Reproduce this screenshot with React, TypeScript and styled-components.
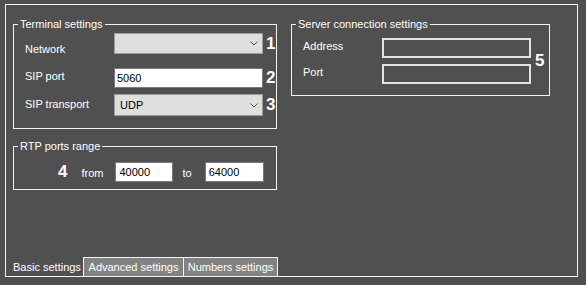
import React from 'react';
import styled, { createGlobalStyle } from 'styled-components';

const GlobalStyle = createGlobalStyle`
    body {
        margin:0;
        background:#505050;
        font-family:"Liberation Sans", Arial, sans-serif;
        font-size:11px;
        color:#ffffff;
    }
`;

const Window = styled.div`
    width:586px;
    height:285px;
    box-sizing:border-box;
    padding:4px 0 0 5px;
    background:#505050;
`;

const Frame = styled.div`
    width:573px;
    height:273px;
    box-sizing:border-box;
    border:1px solid #f2f2f2;
    display:flex;
    flex-direction:column;
`;

const Body = styled.div`
    flex:1;
    display:flex;
    flex-direction:row;
    align-items:flex-start;
    gap:14px;
    padding:13px 0 0 7px;
`;

const Column = styled.div`
    display:flex;
    flex-direction:column;
    gap:11px;
`;

const Group = styled.fieldset<{ $width: number }>`
    margin:0;
    padding:0;
    min-width:0;
    width:${p => p.$width}px;
    box-sizing:border-box;
    border:1px solid #f2f2f2;
`;

const Legend = styled.legend`
    margin-left:4px;
    padding:0 2px;
    line-height:12px;
    font-size:11px;
    color:#ffffff;
`;

const Content = styled.div<{ $pad: string }>`
    padding:${p => p.$pad};
`;

const Row = styled.div<{ $top: number; $height: number }>`
    display:flex;
    flex-direction:row;
    align-items:flex-start;
    margin-top:${p => p.$top}px;
    height:${p => p.$height}px;
`;

const Label = styled.div<{ $width: number; $dy: number }>`
    width:${p => p.$width}px;
    padding-top:${p => p.$dy}px;
    line-height:13px;
    color:#ffffff;
`;

const Combo = styled.div<{ $width: number }>`
    width:${p => p.$width}px;
    height:100%;
    box-sizing:border-box;
    background:#dfdfdf;
    border:1px solid #9c9c9c;
    color:#000000;
    display:flex;
    align-items:center;
    justify-content:space-between;
    padding:0 4px 0 5px;
`;

const TextBox = styled.div<{ $width: number }>`
    width:${p => p.$width}px;
    height:100%;
    box-sizing:border-box;
    background:#ffffff;
    border:1px solid #7a7a7a;
    color:#000000;
    display:flex;
    align-items:center;
    padding-left:2px;
`;

const EmptyBox = styled.div<{ $width: number }>`
    width:${p => p.$width}px;
    height:100%;
    box-sizing:border-box;
    border:2px solid #e4e4e4;
`;

const Marker = styled.div<{ $ml: number }>`
    margin-left:${p => p.$ml}px;
    font-size:17px;
    font-weight:bold;
    line-height:20px;
    color:#ffffff;
    align-self:center;
`;

const ServerGrid = styled.div`
    display:grid;
    grid-template-columns:79px 149px auto;
    grid-template-rows:20px 20px;
    row-gap:6px;
    align-items:center;
`;

const ServerLabel = styled.div<{ $dy: number }>`
    line-height:13px;
    margin-top:${p => p.$dy}px;
`;

const ServerMarker = styled(Marker)`
    grid-row:1 / span 2;
    grid-column:3;
`;

const RangeRow = styled.div`
    display:flex;
    flex-direction:row;
    align-items:center;
    height:20px;
`;

const RangeText = styled.div<{ $ml: number }>`
    margin-left:${p => p.$ml}px;
    line-height:13px;
    padding-top:3px;
`;

const Field = styled(TextBox)<{ $ml: number }>`
    margin-left:${p => p.$ml}px;
    padding-left:3px;
`;

const TabStrip = styled.div`
    height:19px;
    display:flex;
    flex-direction:row;
    align-items:stretch;
`;

const Tab = styled.div<{ $width: number; $active?: boolean; $last?: boolean }>`
    width:${p => p.$width}px;
    box-sizing:border-box;
    display:flex;
    align-items:center;
    justify-content:${p => (p.$active ? 'flex-start' : 'center')};
    padding-left:${p => (p.$active ? '7px' : '0')};
    background:${p => (p.$active ? 'transparent' : '#828282')};
    border-top:${p => (p.$active ? 'none' : '1px solid #f2f2f2')};
    border-left:${p => (p.$active ? 'none' : '1px solid #f2f2f2')};
    border-right:${p => (p.$last ? '1px solid #f2f2f2' : 'none')};
    color:#ffffff;
    font-size:11px;
`;

const Chevron: React.FC = () => (
    <svg width="8" height="5" viewBox="0 0 8 5">
        <path d="M0.5 0.5 L4 4 L7.5 0.5" fill="none" stroke="#555555" strokeWidth="1" />
    </svg>
);

const App: React.FC = () => {
    return (
        <Window>
            <GlobalStyle />
            <Frame>
                <Body>
                    <Column>
                        <Group $width={264}>
                            <Legend>Terminal settings</Legend>
                            <Content $pad="0 0 12px 11px">
                                <Row $top={3} $height={21}>
                                    <Label $width={89} $dy={10}>Network</Label>
                                    <Combo $width={149}><span /><Chevron /></Combo>
                                    <Marker $ml={3}>1</Marker>
                                </Row>
                                <Row $top={14} $height={20}>
                                    <Label $width={89} $dy={2}>SIP port</Label>
                                    <TextBox $width={149}>5060</TextBox>
                                    <Marker $ml={3}>2</Marker>
                                </Row>
                                <Row $top={6} $height={22}>
                                    <Label $width={89} $dy={4}>SIP transport</Label>
                                    <Combo $width={149}><span>UDP</span><Chevron /></Combo>
                                    <Marker $ml={3}>3</Marker>
                                </Row>
                            </Content>
                        </Group>

                        <Group $width={264}>
                            <Legend>RTP ports range</Legend>
                            <Content $pad="10px 0 7px 44px">
                                <RangeRow>
                                    <Marker $ml={0}>4</Marker>
                                    <RangeText $ml={14}>from</RangeText>
                                    <Field $width={58} $ml={12}>40000</Field>
                                    <RangeText $ml={9}>to</RangeText>
                                    <Field $width={59} $ml={13}>64000</Field>
                                </RangeRow>
                            </Content>
                        </Group>
                    </Column>

                    <Group $width={259}>
                        <Legend>Server connection settings</Legend>
                        <Content $pad="8px 0 11px 11px">
                            <ServerGrid>
                                <ServerLabel $dy={-4}>Address</ServerLabel>
                                <EmptyBox $width={149} />
                                <ServerMarker $ml={4}>5</ServerMarker>
                                <ServerLabel $dy={-4}>Port</ServerLabel>
                                <EmptyBox $width={149} />
                            </ServerGrid>
                        </Content>
                    </Group>
                </Body>

                <TabStrip>
                    <Tab $width={77} $active>Basic settings</Tab>
                    <Tab $width={100}>Advanced settings</Tab>
                    <Tab $width={95} $last>Numbers settings</Tab>
                </TabStrip>
            </Frame>
        </Window>
    );
};

export default App;
